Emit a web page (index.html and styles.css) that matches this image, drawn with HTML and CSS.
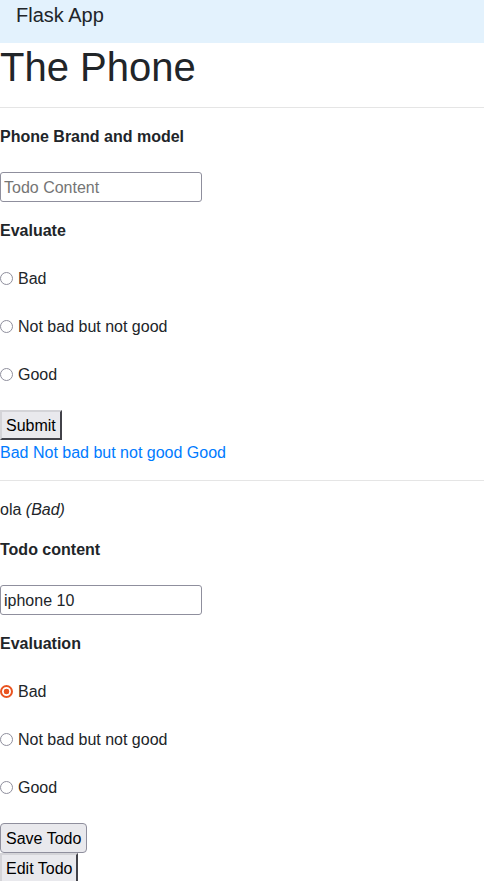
FILE: index.html
```html
<!DOCTYPE html>
<html>
<head>
<meta charset="utf-8">
<link rel="stylesheet" href="styles.css">
</head>
<body>
<nav class="navbar"><span class="brand">Flask App</span></nav>
<h1 class="title">The Phone</h1>
<hr class="rule">
<form class="form">
  <label class="field-label">Phone Brand and model</label>
  <input class="text-input" type="text" placeholder="Todo Content">
  <div class="field-label gap-top">Evaluate</div>
  <div class="radios">
    <label class="radio-row"><input class="radio" type="radio" name="ev">Bad</label>
    <label class="radio-row"><input class="radio" type="radio" name="ev">Not bad but not good</label>
    <label class="radio-row"><input class="radio" type="radio" name="ev">Good</label>
  </div>
  <button class="btn btn-outset" type="button">Submit</button>
</form>
<div class="links"><a href="#">Bad</a> <a href="#">Not bad but not good</a> <a href="#">Good</a></div>
<hr class="rule">
<div class="item">ola <em>(Bad)</em></div>
<form class="form">
  <label class="field-label">Todo content</label>
  <input class="text-input" type="text" value="iphone 10">
  <div class="field-label gap-top">Evaluation</div>
  <div class="radios">
    <label class="radio-row"><input class="radio" type="radio" name="ev2" checked>Bad</label>
    <label class="radio-row"><input class="radio" type="radio" name="ev2">Not bad but not good</label>
    <label class="radio-row"><input class="radio" type="radio" name="ev2">Good</label>
  </div>
  <button class="btn btn-round" type="button">Save Todo</button>
  <button class="btn btn-outset" type="button">Edit Todo</button>
</form>
</body>
</html>
```
FILE: styles.css
```css
html, body {
  margin: 0;
  padding: 0;
  background: #fff;
}
body {
  font-family: "Liberation Sans", Arial, sans-serif;
  font-size: 16px;
  line-height: 24px;
  color: #212529;
}
.navbar {
  background: #e3f2fd;
  height: 43px;
  padding: 0 16px;
  box-sizing: border-box;
}
.brand {
  display: block;
  font-size: 20px;
  line-height: 30px;
  color: #212529;
}
.title {
  margin: 0;
  font-size: 40px;
  line-height: 48px;
  font-weight: 400;
}
.rule {
  margin: 16px 0;
  border: 0;
  border-top: 1px solid rgba(0, 0, 0, 0.1);
  height: 0;
}
.form {
  display: flex;
  flex-direction: column;
  align-items: flex-start;
  margin: 0;
}
.field-label {
  display: block;
  font-weight: 700;
  margin: 0;
  padding-top: 1px;
  line-height: 23px;
}
.gap-top {
  margin-top: 16px;
}
.text-input {
  margin-top: 24px;
  width: 202px;
  height: 30px;
  box-sizing: border-box;
  font-family: inherit;
  font-size: 16px;
  line-height: 24px;
  padding: 2px 3px 0;
  color: #212529;
  border: 1px solid #8f8f9d;
  border-radius: 3px;
  background: #fff;
  outline: none;
}
.text-input::placeholder {
  color: #757575;
}
.radios {
  display: flex;
  flex-direction: column;
  gap: 24px;
  margin-top: 24px;
}
.radio-row {
  display: flex;
  align-items: center;
  height: 24px;
  padding-top: 1px;
  box-sizing: border-box;
  line-height: 23px;
}
.radio {
  appearance: none;
  -webkit-appearance: none;
  width: 13px;
  height: 13px;
  margin: 0 5px 0 0;
  border: 1.5px solid #8f8f9d;
  border-radius: 50%;
  background: #fff;
  box-sizing: border-box;
}
.radio:checked {
  border: 2px solid #e95420;
  background: radial-gradient(circle, #e95420 0 2.6px, #fff 3.1px);
}
.btn {
  font-family: inherit;
  font-size: 16px;
  line-height: 24px;
  color: #000;
  background: #e9e9ed;
  padding: 2px 4px 0;
  margin: 0;
  height: 30px;
  box-sizing: border-box;
}
.form .btn:first-of-type {
  margin-top: 24px;
}
.btn-outset {
  border: 2px outset #d4d4d8;
  border-radius: 0;
  border-bottom-color: #8f8f9d;
  border-right-color: #8f8f9d;
}
.btn-round {
  border: 1px solid #8f8f9d;
  border-radius: 4px;
  padding: 2px 5px 0;
}
.links {
  padding-top: 1px;
  line-height: 23px;
}
.links a {
  color: #007bff;
  text-decoration: none;
}
.item {
  margin-bottom: 16px;
  padding-top: 1px;
  line-height: 23px;
}
```
